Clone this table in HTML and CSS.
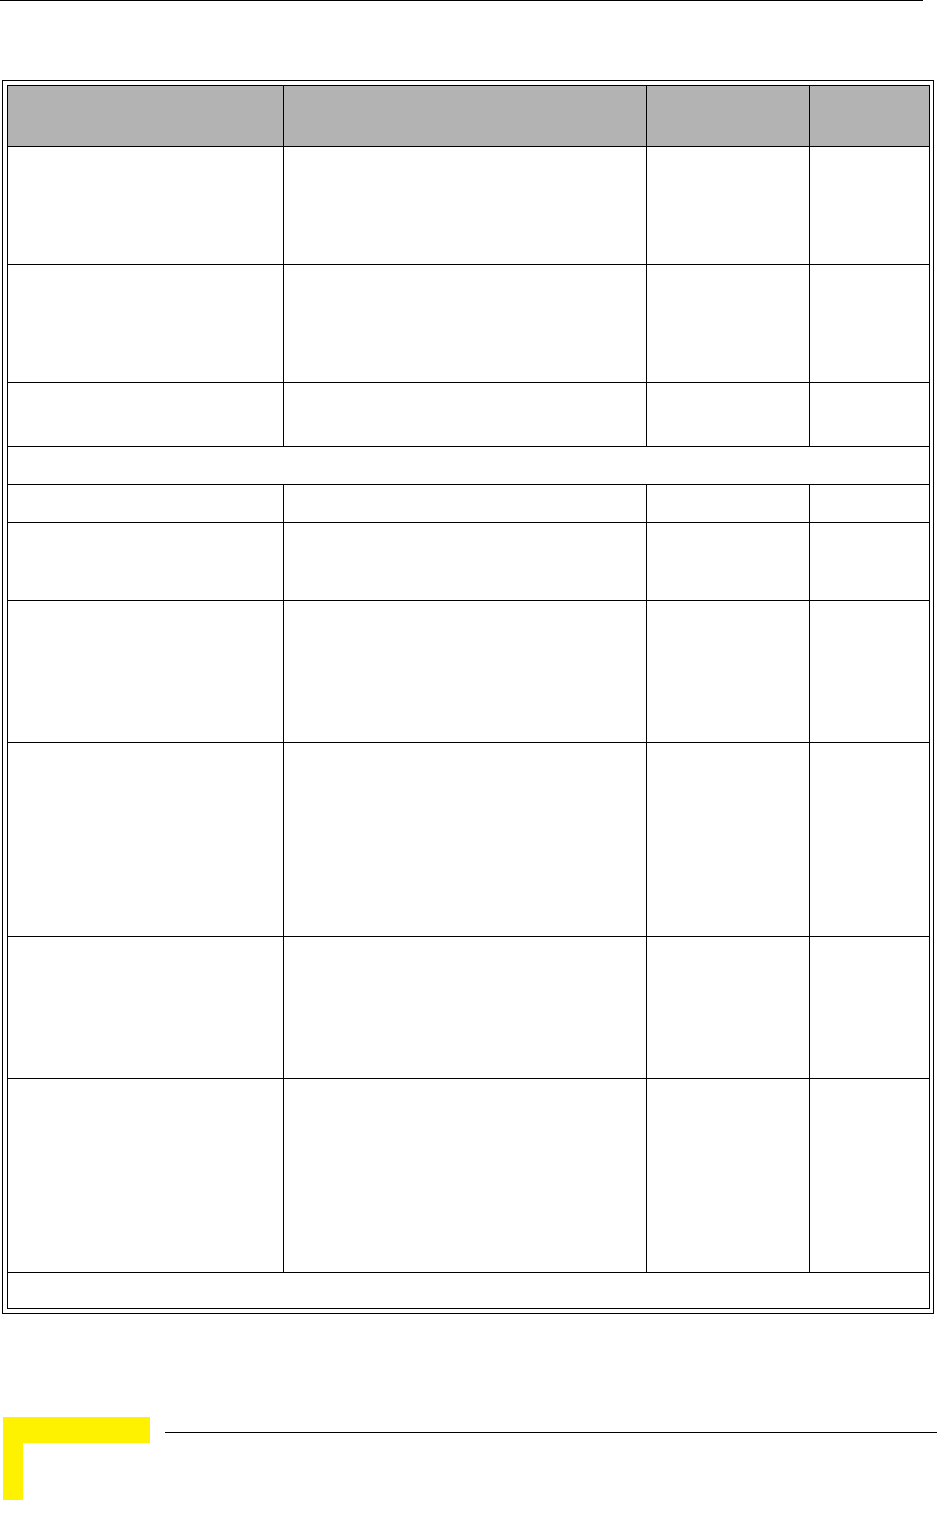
FILE: index.html
```html
<!DOCTYPE html>
<html lang="en">
<head>
<meta charset="utf-8">
<title>Table page</title>
<link rel="stylesheet" href="styles.css">
</head>
<body>
<div class="page">
  <div class="top-rule"></div>
  <div class="frame">
    <div class="grid">
      <div class="cell head"></div><div class="cell head"></div><div class="cell head"></div><div class="cell head"></div>
      <div class="cell r1"></div><div class="cell r1"></div><div class="cell r1"></div><div class="cell r1"></div>
      <div class="cell r2"></div><div class="cell r2"></div><div class="cell r2"></div><div class="cell r2"></div>
      <div class="cell r3"></div><div class="cell r3"></div><div class="cell r3"></div><div class="cell r3"></div>
      <div class="cell r4 span"></div>
      <div class="cell r5"></div><div class="cell r5"></div><div class="cell r5"></div><div class="cell r5"></div>
      <div class="cell r6"></div><div class="cell r6"></div><div class="cell r6"></div><div class="cell r6"></div>
      <div class="cell r7"></div><div class="cell r7"></div><div class="cell r7"></div><div class="cell r7"></div>
      <div class="cell r8"></div><div class="cell r8"></div><div class="cell r8"></div><div class="cell r8"></div>
      <div class="cell r9"></div><div class="cell r9"></div><div class="cell r9"></div><div class="cell r9"></div>
      <div class="cell r10"></div><div class="cell r10"></div><div class="cell r10"></div><div class="cell r10"></div>
      <div class="cell r11 span"></div>
    </div>
  </div>
  <div class="footer">
    <div class="corner">
      <div class="corner-bar"></div>
      <div class="corner-stem"></div>
    </div>
    <div class="footer-rule"></div>
  </div>
</div>
</body>
</html>
```
FILE: styles.css
```css
html, body {
  margin: 0;
  padding: 0;
  background: #ffffff;
  font-family: "Liberation Sans", Arial, sans-serif;
}

.page {
  width: 937px;
  height: 1533px;
  overflow: hidden;
}

.top-rule {
  width: 923px;
  height: 1px;
  background: #000000;
}

.frame {
  margin: 79px 0 0 2px;
  width: 923px;
  padding: 4px 3px 4px 4px;
  border: 1px solid #000000;
}

.grid {
  display: grid;
  grid-template-columns: 275px 362px 162px 119px;
  grid-template-rows: 60px 117px 117px 63px 37px 37px 77px 141px 193px 141px 193px 35px;
  gap: 1px;
  padding: 1px;
  background: #000000;
  width: 921px;
}

.cell {
  background: #ffffff;
}

.cell.head {
  background: #b3b3b3;
}

.cell.span {
  grid-column: 1 / -1;
}

.footer {
  display: flex;
  align-items: flex-start;
  margin-top: 103px;
  padding-left: 3px;
}

.corner {
  display: flex;
  flex-direction: column;
  width: 147px;
}

.corner-bar {
  height: 26px;
  background: #fff200;
}

.corner-stem {
  width: 20px;
  height: 57px;
  background: #fff200;
}

.footer-rule {
  flex: 1;
  height: 1px;
  margin: 15px 0 0 15px;
  background: #000000;
}
```
